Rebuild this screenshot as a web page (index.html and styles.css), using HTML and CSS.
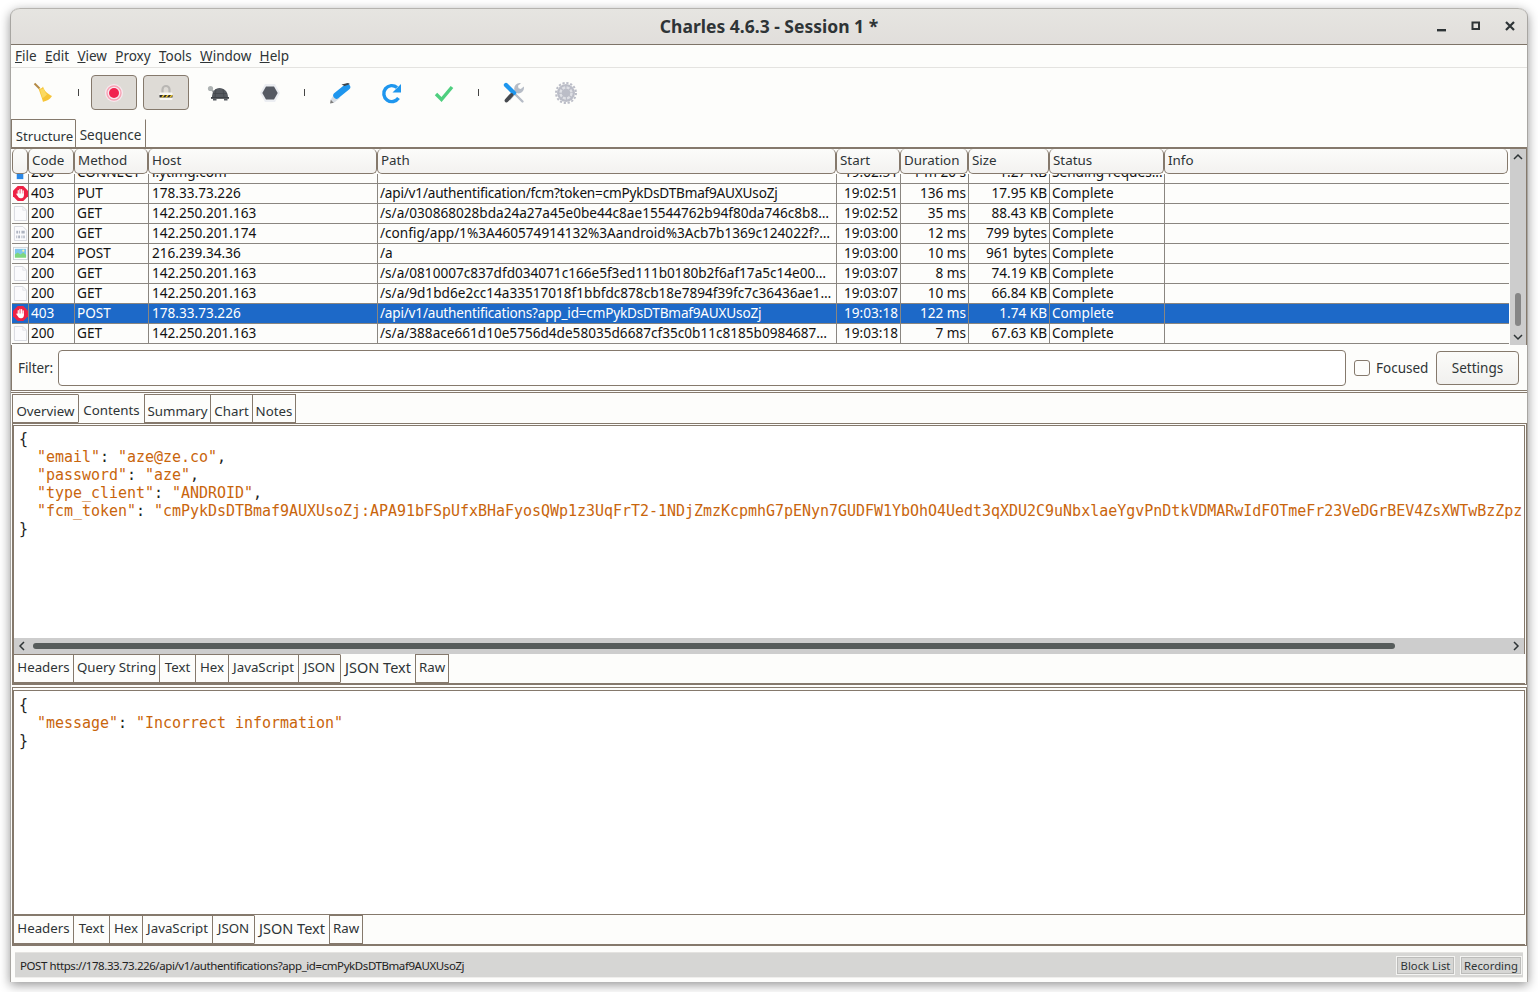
FILE: index.html
```html
<!DOCTYPE html>
<html lang="en">
<head>
<meta charset="utf-8">
<title>Charles 4.6.3 - Session 1 *</title>
<link rel="stylesheet" href="styles.css">
</head>
<body>
<div class="window">
  <header class="titlebar">
    <span class="title">Charles 4.6.3 - Session 1 *</span>
    <div class="winctl">
      <svg width="12" height="12" viewBox="0 0 12 12"><rect x="1" y="9" width="9" height="2.4" fill="#2e3436"/></svg>
      <svg width="12" height="12" viewBox="0 0 12 12"><rect x="2.5" y="2.5" width="6.5" height="6.5" fill="none" stroke="#2e3436" stroke-width="2"/></svg>
      <svg width="12" height="12" viewBox="0 0 12 12"><path d="M2 2l8 8M10 2l-8 8" stroke="#2e3436" stroke-width="2.2"/></svg>
    </div>
  </header>
  <nav class="menubar">
    <span><u>F</u>ile</span><span><u>E</u>dit</span><span><u>V</u>iew</span><span><u>P</u>roxy</span><span><u>T</u>ools</span><span><u>W</u>indow</span><span><u>H</u>elp</span>
  </nav>
  <div class="toolbar">
    <div class="tool"><svg width="24" height="24" viewBox="0 0 24 24"><path d="M2.500 2.500l5 5" stroke="#b48a45" stroke-width="2"/><path d="M6.500 7.500C9 8 10.500 7 11 5.500 12 10 16 13 20 15 18 19 13 20 11 21 10 17 8 12 6.500 7.500z" fill="#f6c437"/><path d="M8 8.500c2 0 3-1 3.500-1.500 1 3 2 5 3.500 6.500-2 2-3 3-4.500 3.500C9.500 14 8.500 11 8 8.500z" fill="#fbd961"/></svg></div>
    <i class="sep"></i>
    <div class="tool on"><svg width="24" height="24" viewBox="0 0 24 24"><circle cx="12" cy="12" r="9" fill="#f6e9ee"/><circle cx="12" cy="12" r="7" fill="none" stroke="#f7a3b4" stroke-width="1.4"/><circle cx="12" cy="12" r="5" fill="#f1224f"/></svg></div>
    <div class="tool on"><svg width="24" height="24" viewBox="0 0 24 24"><path d="M8.500 12V8.500a3.500 3.500 0 0 1 7 0V12" fill="none" stroke="#b9b7b4" stroke-width="2.200"/><rect x="5.500" y="11.500" width="13" height="7.500" rx="1" fill="#f8f7f3"/><path d="M5.500 14h13v2.500h-13z" fill="#2b2b2b"/><path d="M7 16.500L9 14h1.800l-2 2.500zM11 16.500l2-2.500h1.800l-2 2.500zM15 16.500l2-2.500h1.500v.4l-1.700 2.100z" fill="#ecc52c"/></svg></div>
    <div class="tool"><svg width="24" height="24" viewBox="0 0 24 24"><path d="M4 8l5 2-1 3z" fill="#a0a5a5"/><circle cx="4.500" cy="7.500" r="2.600" fill="#aeb3b3"/><path d="M6 16.500c0-6 3-9.500 7.500-9.500S22 10.500 22 16.500z" fill="#565a60"/><path d="M10 8l-1 8.500M17 8l1 8.500M7 12.500h14" stroke="#44474c" stroke-width=".8" fill="none"/><path d="M5 16h18v1.800H5z" fill="#3e4247"/><rect x="7" y="17.500" width="3.500" height="2" fill="#565a60"/><rect x="18" y="17.500" width="3.500" height="2" fill="#565a60"/></svg></div>
    <div class="tool"><svg width="24" height="24" viewBox="0 0 24 24"><path d="M7 3h10l5 9-5 9H7L2 12z" fill="#eceef2"/><path d="M8 5.500h8l3.700 6.500-3.700 6.500H8L4.300 12z" fill="#565a63"/></svg></div>
    <i class="sep"></i>
    <div class="tool"><svg width="24" height="24" viewBox="0 0 24 24"><path d="M2 22.500l.8-4 3.200 3.200z" fill="#7d7d7d"/><path d="M2.800 18.500L7 12l5 5-6 4.700z" fill="#d6dce3"/><path d="M7 13L17.500 4.500" stroke="#1e96ee" stroke-width="6.500" stroke-linecap="round" transform="translate(1.500 1.500)"/><path d="M13.500 3.500l6.500-1.500 2 1-5.500 2z" fill="#3f4348"/></svg></div>
    <div class="tool"><svg width="24" height="24" viewBox="0 0 24 24"><path d="M18.500 17a8 8 0 1 1-1.500-10.500" fill="none" stroke="#1e96ee" stroke-width="3.400"/><path d="M21 3v8.500h-8.500z" fill="#1e96ee"/></svg></div>
    <div class="tool"><svg width="24" height="24" viewBox="0 0 24 24"><path d="M4 13l5.500 5.500L20 6" fill="none" stroke="#4fcf7f" stroke-width="3.400"/></svg></div>
    <i class="sep"></i>
    <div class="tool"><svg width="24" height="24" viewBox="0 0 24 24"><path d="M13 13l7.500 7.500" stroke="#b6bcc6" stroke-width="2.400" stroke-linecap="round"/><path d="M21.800 5.500l-3 2.500-2.300-.8-.5-2.400 3-2.600a5.500 5.500 0 0 0-6.500 7L5 16.500 8 19.500 14.500 12a5.500 5.500 0 0 0 7.300-6.500z" fill="#b6bcc6"/><path d="M4 4l8 8" stroke="#1e96ee" stroke-width="4.400" stroke-linecap="round"/><path d="M9.500 14L4.500 19.500" stroke="#46494e" stroke-width="3.800" stroke-linecap="round"/></svg></div>
    <div class="tool"><svg width="24" height="24" viewBox="0 0 24 24"><circle cx="12" cy="12" r="9" fill="#bbbdc7"/><circle cx="12" cy="12" r="10" fill="none" stroke="#bbbdc7" stroke-width="2" stroke-dasharray="2.200 1.730"/><circle cx="12" cy="12" r="5.500" fill="none" stroke="#dfe0e5" stroke-width="2.400" stroke-dasharray="3 1.300"/></svg></div>
  </div>

  <div class="tabs viewtabs">
    <span class="tab">Structure</span><span class="tab active">Sequence</span>
  </div>

  <div class="tablewrap">
    <div class="tablemain">
      <div class="row head">
        <span></span><span>Code</span><span>Method</span><span>Host</span><span>Path</span><span>Start</span><span>Duration</span><span>Size</span><span>Status</span><span>Info</span>
      </div>
      <div class="clipped">
        <div class="row">
          <span class="ic"><svg viewBox="0 0 16 16"><rect x="4" y="2" width="7" height="12" fill="#2b88e6"/></svg></span><span>200</span><span>CONNECT</span><span>i.ytimg.com</span><span></span><span class="r">19:02:51</span><span class="r">1 m 20 s</span><span class="r">1.27 KB</span><span>Sending reques...</span><span></span>
        </div>
      </div>
      <div class="row">
        <span class="ic"><svg viewBox="0 0 16 16"><use href="#stop"/></svg></span><span>403</span><span>PUT</span><span>178.33.73.226</span><span class="tight">/api/v1/authentification/fcm?token=cmPykDsDTBmaf9AUXUsoZj</span><span class="r">19:02:51</span><span class="r">136 ms</span><span class="r">17.95 KB</span><span>Complete</span><span></span>
      </div>
      <div class="row">
        <span class="ic"><svg viewBox="0 0 16 16"><use href="#doc"/></svg></span><span>200</span><span>GET</span><span>142.250.201.163</span><span>/s/a/030868028bda24a27a45e0be44c8ae15544762b94f80da746c8b8…</span><span class="r">19:02:52</span><span class="r">35 ms</span><span class="r">88.43 KB</span><span>Complete</span><span></span>
      </div>
      <div class="row">
        <span class="ic"><svg viewBox="0 0 16 16"><use href="#bin"/></svg></span><span>200</span><span>GET</span><span>142.250.201.174</span><span>/config/app/1%3A460574914132%3Aandroid%3Acb7b1369c124022f?…</span><span class="r">19:03:00</span><span class="r">12 ms</span><span class="r">799 bytes</span><span>Complete</span><span></span>
      </div>
      <div class="row">
        <span class="ic"><svg viewBox="0 0 16 16"><use href="#img"/></svg></span><span>204</span><span>POST</span><span>216.239.34.36</span><span>/a</span><span class="r">19:03:00</span><span class="r">10 ms</span><span class="r">961 bytes</span><span>Complete</span><span></span>
      </div>
      <div class="row">
        <span class="ic"><svg viewBox="0 0 16 16"><use href="#doc"/></svg></span><span>200</span><span>GET</span><span>142.250.201.163</span><span>/s/a/0810007c837dfd034071c166e5f3ed111b0180b2f6af17a5c14e00…</span><span class="r">19:03:07</span><span class="r">8 ms</span><span class="r">74.19 KB</span><span>Complete</span><span></span>
      </div>
      <div class="row">
        <span class="ic"><svg viewBox="0 0 16 16"><use href="#doc"/></svg></span><span>200</span><span>GET</span><span>142.250.201.163</span><span>/s/a/9d1bd6e2cc14a33517018f1bbfdc878cb18e7894f39fc7c36436ae1…</span><span class="r">19:03:07</span><span class="r">10 ms</span><span class="r">66.84 KB</span><span>Complete</span><span></span>
      </div>
      <div class="row sel">
        <span class="ic"><svg viewBox="0 0 16 16"><use href="#stop"/></svg></span><span>403</span><span>POST</span><span>178.33.73.226</span><span class="tight">/api/v1/authentifications?app_id=cmPykDsDTBmaf9AUXUsoZj</span><span class="r">19:03:18</span><span class="r">122 ms</span><span class="r">1.74 KB</span><span>Complete</span><span></span>
      </div>
      <div class="row">
        <span class="ic"><svg viewBox="0 0 16 16"><use href="#doc"/></svg></span><span>200</span><span>GET</span><span>142.250.201.163</span><span>/s/a/388ace661d10e5756d4de58035d6687cf35c0b11c8185b0984687…</span><span class="r">19:03:18</span><span class="r">7 ms</span><span class="r">67.63 KB</span><span>Complete</span><span></span>
      </div>
    </div>
    <div class="vscroll">
      <svg width="10" height="8" viewBox="0 0 10 8"><path d="M1 6l4-4 4 4" fill="none" stroke="#2e3436" stroke-width="1.500"/></svg>
      <i class="vthumb"></i>
      <svg width="10" height="8" viewBox="0 0 10 8"><path d="M1 2l4 4 4-4" fill="none" stroke="#2e3436" stroke-width="1.500"/></svg>
    </div>
  </div>

  <div class="filter">
    <label>Filter:</label>
    <div class="input"></div>
    <i class="check"></i>
    <span class="focused">Focused</span>
    <span class="btn">Settings</span>
  </div>

  <div class="lower">
    <div class="tabs sessiontabs">
      <span class="tab">Overview</span><span class="tab active">Contents</span><span class="tab">Summary</span><span class="tab">Chart</span><span class="tab">Notes</span>
    </div>
    <section class="frame reqframe">
      <div class="pane reqpane">
        <pre class="code">{
  <b>"email"</b>: <b>"aze@ze.co"</b>,
  <b>"password"</b>: <b>"aze"</b>,
  <b>"type_client"</b>: <b>"ANDROID"</b>,
  <b>"fcm_token"</b>: <b>"cmPykDsDTBmaf9AUXUsoZj:APA91bFSpUfxBHaFyosQWp1z3UqFrT2-1NDjZmzKcpmhG7pENyn7GUDFW1YbOhO4Uedt3qXDU2C9uNbxlaeYgvPnDtkVDMARwIdFOTmeFr23VeDGrBEV4ZsXWTwBzZpz</b>
}</pre>
        <div class="hscroll">
          <svg width="8" height="10" viewBox="0 0 8 10"><path d="M6 1L2 5l4 4" fill="none" stroke="#2e3436" stroke-width="1.500"/></svg>
          <i class="hthumb"></i>
          <svg width="8" height="10" viewBox="0 0 8 10"><path d="M2 1l4 4-4 4" fill="none" stroke="#2e3436" stroke-width="1.500"/></svg>
        </div>
      </div>
      <div class="tabs subtabs reqtabs">
        <span class="tab">Headers</span><span class="tab">Query String</span><span class="tab">Text</span><span class="tab">Hex</span><span class="tab">JavaScript</span><span class="tab">JSON</span><span class="tab active">JSON Text</span><span class="tab">Raw</span>
      </div>
    </section>
    <section class="frame resframe">
      <div class="pane respane">
        <pre class="code">{
  <b>"message"</b>: <b>"Incorrect information"</b>
}</pre>
      </div>
      <div class="tabs subtabs restabs">
        <span class="tab">Headers</span><span class="tab">Text</span><span class="tab">Hex</span><span class="tab">JavaScript</span><span class="tab">JSON</span><span class="tab active">JSON Text</span><span class="tab">Raw</span>
      </div>
    </section>
  </div>

  <footer class="status">
    <span class="url">POST https://178.33.73.226/api/v1/authentifications?app_id=cmPykDsDTBmaf9AUXUsoZj</span>
    <span class="pill block">Block List</span>
    <span class="pill rec">Recording</span>
  </footer>
</div>

<svg class="defs" width="0" height="0">
  <defs>
    <g id="stop"><path d="M5 0h6l5 5v6l-5 5H5l-5-5V5z" fill="#ee2244"/><path d="M5.600 5v4M7.400 3.600v5M9.200 3.800v5M10.900 5.200v4.500" stroke="#fff" stroke-width="1.300" stroke-linecap="round"/><path d="M5 8h6.500v2c0 1.800-1 3-2.500 3H7.800c-1.100 0-1.800-.7-2.500-1.800L3.700 9c-.4-.9.5-1.300 1.300-.6z" fill="#fff"/></g>
    <g id="doc"><path d="M1.500 .5h9l4 4v11h-13z" fill="#fbfbfd" stroke="#d5d8de"/><path d="M10.500 .5v4h4" fill="none" stroke="#e2e4e9"/></g>
    <g id="bin"><path d="M1.500 .5h9l4 4v11h-13z" fill="#fbfbfd" stroke="#d5d8de"/><path d="M3.500 5h2v3h-2zM6.500 5h1v3h-1zM9 5h3.500v3H9zM3.500 10h1v3h-1zM5.500 10h2v3h-2zM9 10h1v3H9zM11 10h1.500v3H11z" fill="#aeb4c0"/></g>
    <g id="img"><rect x=".5" y="1.500" width="15" height="13" fill="#fff" stroke="#cfd3d8"/><rect x="2" y="3" width="12" height="7" fill="#7fc6ee"/><path d="M2 12.500V9l3-2 3 2 3-2 3 2.500v3z" fill="#7ed67e"/><circle cx="11" cy="5" r="1.200" fill="#fdf3a8"/></g>
  </defs>
</svg>
</body>
</html>
```
FILE: styles.css
```css
* { box-sizing: border-box; }
html, body { margin: 0; height: 100%; }
body {
  background: #fff;
  padding: 8px 10px 10px;
  font-family: "Noto Sans", "Liberation Sans", sans-serif;
  font-size: 13.5px;
  color: #2e3436;
  overflow: hidden;
}
.defs { position: absolute; }
.window {
  width: 1518px;
  height: 974px;
  display: flex;
  flex-direction: column;
  background: #fdfdfb;
  border-radius: 9px 9px 0 0;
  box-shadow: 0 3px 11px rgba(0,0,0,.42);
  border: 1px solid #a8a6a2;
  border-bottom: 0;
  border-top: 0;
}
.titlebar {
  height: 37px;
  flex: none;
  display: flex;
  align-items: center;
  justify-content: center;
  position: relative;
  padding-bottom: 2px;
  background: linear-gradient(#e6e5e1, #e1dedb);
  border-bottom: 1px solid #7e7468;
  border-radius: 9px 9px 0 0;
  border-top: 1px solid #b5b3af;
}
.title { font-weight: 700; font-size: 17.5px; color: #2e3436; }
.winctl {
  position: absolute;
  right: 11px;
  top: 11px;
  display: flex;
  gap: 22px;
}
.menubar {
  height: 23px;
  flex: none;
  display: flex;
  align-items: center;
  gap: 8.3px;
  padding: 0 0 0 4px;
  border-bottom: 1px solid #e4e3e0;
  font-size: 13.5px;
}
.toolbar {
  height: 51px;
  flex: none;
  display: flex;
  align-items: center;
  padding: 0 0 2px 10px;
  gap: 6px;
}
.tool {
  width: 46px;
  height: 35px;
  display: flex;
  align-items: center;
  justify-content: center;
  border: 1px solid transparent;
  border-radius: 4px;
}
.tool.on { background: #dedbd6; border-color: #85796c; }
.sep { width: 1px; height: 7px; background: #444; margin: 0 6px 0 5px; }

/* tab strips */
.tabs { display: grid; flex: none; width: max-content; }
.tab {
  display: flex;
  align-items: center;
  justify-content: center;
  border: 1px solid #85796c;
  border-right-width: 0;
  background: #fdfdfb;
  white-space: nowrap;
  padding-top: 1px;
}
.tab:last-child { border-right-width: 1px; }
.tab.active {
  border-top-color: transparent;
  border-bottom-color: transparent;
  padding-top: 0;
}
.viewtabs {
  height: 28px;
  grid-template-columns: 64px 71px;
}
.viewtabs .tab { border-bottom: 0; padding: 5px 0 0 2px; font-size: 13.2px; }
.viewtabs .tab.active { padding: 3px 0 0; font-size: 13.5px; }
.sessiontabs {
  height: 29px;
  grid-template-columns: 66px 66px 66px 42px 44px;
  font-size: 13.3px;
}
.sessiontabs .tab { padding-top: 5px; }
.sessiontabs .tab.active { padding-top: 3px; }
.subtabs {
  width: auto;
  height: 30px;
  grid-auto-rows: 29px;
  border-bottom: 1px solid #85796c;
  font-size: 13.3px;
}
.subtabs .tab { padding-bottom: 4px; padding-top: 0; }
.subtabs .tab.active { font-size: 14.5px; padding-bottom: 3px; padding-top: 0; }
.reqtabs { grid-template-columns: 60px 86px 36px 33px 70px 42px 75px 34px; }
.restabs { grid-template-columns: 60px 36px 33px 70px 42px 75px 34px; }

/* session table */
.tablewrap {
  height: 198px;
  flex: none;
  display: flex;
  padding-left: 1px;
  border-top: 2px solid #85796c;
}
.tablemain { width: 1497px; flex: none; overflow: hidden; }
.row {
  display: grid;
  grid-template-columns: 17px 46px 74px 229px 459px 64px 68px 81px 115px 344px;
  height: 20px;
  border-bottom: 1px solid #8a8680;
  color: #111;
  font-size: 13.6px;
  line-height: 18px;
}
.row > span {
  border-right: 1px solid #8a8680;
  padding: 0 2px;
  overflow: hidden;
  white-space: nowrap;
}
.row > span:nth-child(4) { padding-left: 3px; }
.row > span:last-child { border-right: 0; }
.row .tight { letter-spacing: -.2px; }
.row .r { text-align: right; padding: 0 2px 0 0; }
.row .ic { padding: 0; display: flex; align-items: center; justify-content: center; }
.row .ic svg { width: 15px; height: 15px; }
.row.sel { background: #1d69c8; color: #fff; }
.row.head {
  grid-template-columns: 16px 46px 74px 229px 459px 64px 68px 81px 115px 344px;
  height: 25px;
  border-bottom: 0;
  color: #2e3436;
  font-size: 13.4px;
  line-height: 23px;
}
.row.head > span {
  border: 1px solid #85796c;
  border-top: 0;
  border-radius: 5px;
  background: linear-gradient(#fcfcfa, #f3f2f0);
  padding: 0 3px;
}
.clipped {
  height: 10px;
  overflow: hidden;
  border-bottom: 1px solid #8a8680;
  display: flex;
  align-items: flex-end;
}
.clipped .row { flex: none; border-bottom: 0; height: 20px; }
.vscroll {
  width: 17px;
  margin-left: 1px;
  background: #cdcdcd;
  border-right: 1px solid #85796c;
  display: flex;
  flex-direction: column;
  align-items: center;
  justify-content: space-between;
  padding: 4px 0;
  position: relative;
}
.vthumb {
  position: absolute;
  top: 144px;
  left: 5px;
  width: 6px;
  height: 33px;
  border-radius: 3px;
  background: #868686;
}

/* filter row */
.filter {
  height: 46px;
  flex: none;
  display: flex;
  align-items: center;
  padding: 0 0 0 6px;
  border-bottom: 1px solid #85796c;
  border-left: 1px solid #85796c;
}
.filter label { margin-right: 5px; width: 35px; letter-spacing: -.1px; white-space: nowrap; }
.input {
  width: 1288px;
  height: 36px;
  background: #fff;
  border: 1px solid #85796c;
  border-radius: 4px;
  margin-right: 8px;
}
.check {
  width: 16px;
  height: 16px;
  border: 1px solid #85796c;
  border-radius: 3px;
  background: #fdfdfb;
  margin-right: 6px;
}
.focused { margin-right: 8px; width: 52px; }
.btn {
  width: 83px;
  height: 34px;
  display: flex;
  align-items: center;
  justify-content: center;
  border: 1px solid #85796c;
  border-radius: 4px;
  background: linear-gradient(#fbfbf9, #f1f0ee);
}

/* lower panes */
.lower {
  flex: none;
  margin-top: 1px;
  border-top: 1px solid #85796c;
  padding: 1px 0 0 1px;
  display: flex;
  flex-direction: column;
}
.frame {
  border: 1px solid #85796c;
  display: flex;
  flex-direction: column;
  flex: none;
}
.reqframe { height: 262px; padding: 1px 1px 0 0; }
.resframe { height: 259px; padding: 2px 1px 0 0; margin-top: 2px; }
.pane {
  border: 1px solid #85796c;
  border-bottom: 0;
  background: #fff;
  display: flex;
  flex-direction: column;
  flex: none;
}
.reqpane { height: 229px; }
.respane { height: 225px; border-bottom: 1px solid #85796c; }
.code {
  margin: 0;
  flex: 1;
  padding: 4px 0 0 5px;
  font: 15px/18px "DejaVu Sans Mono", "Liberation Mono", monospace;
  letter-spacing: -.03px;
  color: #222;
  overflow: hidden;
  white-space: pre;
}
.respane .code { padding-top: 5px; }
.code b { font-weight: 400; color: #c9650c; }
.hscroll {
  height: 16px;
  flex: none;
  background: #cdcdcd;
  display: flex;
  align-items: center;
  justify-content: space-between;
  padding: 0 4px;
  position: relative;
}
.hthumb {
  position: absolute;
  left: 19px;
  top: 5px;
  width: 1362px;
  height: 6px;
  border-radius: 3px;
  background: #565c5b;
}

/* status bar */
.status {
  margin: 6px 4px 0;
  height: 26px;
  flex: none;
  display: flex;
  align-items: center;
  background: #d6d6d4;
  border-top: 1px solid #e4e3e0;
  border-bottom: 1px solid #efeeec;
  font-size: 11.5px;
  padding: 0 1px 0 5px;
  gap: 5px;
}
.url { flex: 1; letter-spacing: -.42px; color: #222; }
.pill {
  height: 19px;
  display: flex;
  align-items: center;
  justify-content: center;
  border: 1px solid #f4f4f2;
  outline: 1px solid #bcbcba;
  outline-offset: -2px;
  font-size: 11.3px;
}
.block { width: 59px; }
.rec { width: 62px; }
```
